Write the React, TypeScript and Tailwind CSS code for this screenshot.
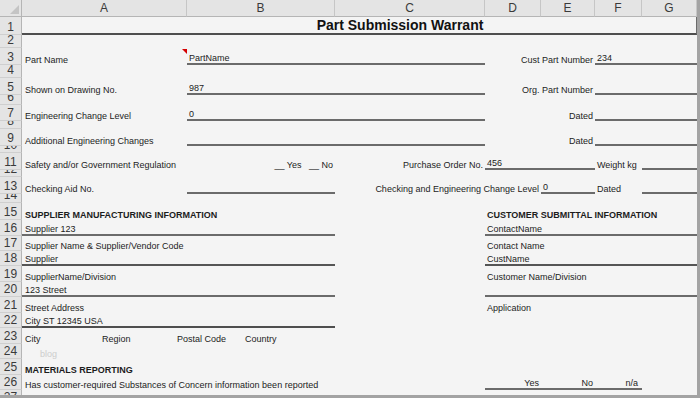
import React from 'react';

// column template: row header, A, B, C, D, E, F, G
const COLS = 'grid grid-rows-1 grid-cols-[22px_165px_148px_150px_56px_54px_47px_55px]';
const T = 'flex items-end whitespace-nowrap text-[9px] leading-[10px] text-[#1c1c1c]';
const L = 'border-b-2 border-[#6b6b6b]';
const B = 'font-bold';

function Row({ n, h, children }: { n: number; h: string; children?: React.ReactNode }) {
  return (
    <div className={`${COLS} ${h}`}>
      <div className="flex items-end justify-center overflow-hidden border-b border-r border-b-[#cfcfcf] border-r-[#b5b5b5] bg-[#e4e4e4] text-[12px] leading-[14px] text-[#3a3a3a]">
        {n}
      </div>
      {children}
    </div>
  );
}

const LETTERS = ['A', 'B', 'C', 'D', 'E', 'F', 'G'];

function App() {
  return (
    <div className="h-[398px] w-[700px] overflow-hidden border-b-[3px] border-r-[3px] border-[#a3a3a3] bg-[#f4f4f4] font-['Liberation_Sans',Arial,sans-serif]">
      {/* Column headers */}
      <div className={`${COLS} h-[17px] bg-[#e4e4e4]`}>
        <div className="relative border-b border-r border-[#b5b5b5]">
          <span className="absolute bottom-[2px] right-[2px] h-0 w-0 border-b-[9px] border-l-[9px] border-b-[#c4c4c4] border-l-transparent" />
        </div>
        {LETTERS.map((l) => (
          <div
            key={l}
            className="flex items-center justify-center border-b border-r border-b-[#b5b5b5] border-r-[#c6c6c6] text-[12px] leading-[14px] text-[#3a3a3a]"
          >
            {l}
          </div>
        ))}
      </div>

      <Row n={1} h="h-[18px]">
        <div className="col-span-7 col-start-2 flex items-end justify-center border-b-2 border-r border-b-[#4e4e4e] border-r-[#6b6b6b] pl-[82px] text-[14px] font-bold leading-[16px] text-[#111]">
          Part Submission Warrant
        </div>
      </Row>
      <Row n={2} h="h-[13px]" />
      <Row n={3} h="h-[17px]">
        <div className={`${T} relative col-start-2 pl-[3px]`}>
          Part Name
          <span className="absolute right-0 top-[1px] h-0 w-0 border-l-[5px] border-t-[5px] border-l-transparent border-t-[#d40000]" />
        </div>
        <div className={`${T} ${L} col-span-2 col-start-3 pl-[2px]`}>PartName</div>
        <div className={`${T} col-span-2 col-start-5 justify-end pr-[2px]`}>Cust Part Number</div>
        <div className={`${T} ${L} col-span-2 col-start-7 pl-[2px]`}>234</div>
      </Row>
      <Row n={4} h="h-[13px]" />
      <Row n={5} h="h-[17px]">
        <div className={`${T} col-start-2 pl-[3px]`}>Shown on Drawing No.</div>
        <div className={`${T} ${L} col-span-2 col-start-3 pl-[2px]`}>987</div>
        <div className={`${T} col-span-2 col-start-5 justify-end pr-[2px]`}>Org. Part Number</div>
        <div className={`${T} ${L} col-span-2 col-start-7`} />
      </Row>
      <Row n={6} h="h-[10px]" />
      <Row n={7} h="h-[16px]">
        <div className={`${T} col-start-2 pl-[3px]`}>Engineering Change Level</div>
        <div className={`${T} ${L} col-span-2 col-start-3 pl-[2px]`}>0</div>
        <div className={`${T} col-span-2 col-start-5 justify-end pr-[2px]`}>Dated</div>
        <div className={`${T} ${L} col-span-2 col-start-7`} />
      </Row>
      <Row n={8} h="h-[8px]" />
      <Row n={9} h="h-[17px]">
        <div className={`${T} col-start-2 pl-[3px]`}>Additional Engineering Changes</div>
        <div className={`${T} ${L} col-span-2 col-start-3`} />
        <div className={`${T} col-span-2 col-start-5 justify-end pr-[2px]`}>Dated</div>
        <div className={`${T} ${L} col-span-2 col-start-7`} />
      </Row>
      <Row n={10} h="h-[7px]" />
      <Row n={11} h="h-[17px]">
        <div className={`${T} col-start-2 pl-[3px]`}>Safety and/or Government Regulation</div>
        <div className={`${T} col-start-3 justify-end whitespace-pre pr-[2px]`}>__ Yes   __ No</div>
        <div className={`${T} col-start-4 justify-end pr-[2px]`}>Purchase Order No.</div>
        <div className={`${T} ${L} col-span-2 col-start-5 pl-[2px]`}>456</div>
        <div className={`${T} col-start-7 pl-[2px]`}>Weight kg</div>
        <div className={`${T} ${L} col-start-8`} />
      </Row>
      <Row n={12} h="h-[7px]" />
      <Row n={13} h="h-[17px]">
        <div className={`${T} col-start-2 pl-[3px]`}>Checking Aid No.</div>
        <div className={`${T} ${L} col-start-3`} />
        <div className={`${T} col-span-2 col-start-4 justify-end pr-[2px]`}>
          Checking and Engineering Change Level
        </div>
        <div className={`${T} ${L} col-start-6 pl-[2px]`}>0</div>
        <div className={`${T} col-start-7 pl-[2px]`}>Dated</div>
        <div className={`${T} ${L} col-start-8`} />
      </Row>
      <Row n={14} h="h-[9px]" />
      <Row n={15} h="h-[17px]">
        <div className={`${T} ${B} col-start-2 pl-[3px]`}>SUPPLIER MANUFACTURING INFORMATION</div>
        <div className={`${T} ${B} col-start-5 pl-[2px]`}>CUSTOMER SUBMITTAL INFORMATION</div>
      </Row>
      <Row n={16} h="h-[16px]">
        <div className={`${T} ${L} col-span-2 col-start-2 pl-[3px]`}>Supplier 123</div>
        <div className={`${T} ${L} col-span-4 col-start-5 pl-[2px]`}>ContactName</div>
      </Row>
      <Row n={17} h="h-[15px]">
        <div className={`${T} col-start-2 pl-[3px]`}>Supplier Name &amp; Supplier/Vendor Code</div>
        <div className={`${T} col-start-5 pl-[2px]`}>Contact Name</div>
      </Row>
      <Row n={18} h="h-[15px]">
        <div className={`${T} col-span-2 col-start-2 border-b-2 border-[#555] pl-[3px]`}>Supplier</div>
        <div className={`${T} col-span-4 col-start-5 border-b-2 border-[#555] pl-[2px]`}>CustName</div>
      </Row>
      <Row n={19} h="h-[16px]">
        <div className={`${T} col-start-2 pl-[3px]`}>SupplierName/Division</div>
        <div className={`${T} col-start-5 pl-[2px]`}>Customer Name/Division</div>
      </Row>
      <Row n={20} h="h-[15px]">
        <div className={`${T} ${L} col-span-2 col-start-2 pl-[3px]`}>123 Street</div>
        <div className={`${T} ${L} col-span-4 col-start-5`} />
      </Row>
      <Row n={21} h="h-[16px]">
        <div className={`${T} col-start-2 pl-[3px]`}>Street Address</div>
        <div className={`${T} col-start-5 pl-[2px]`}>Application</div>
      </Row>
      <Row n={22} h="h-[15px]">
        <div className={`${T} col-span-2 col-start-2 border-b-2 border-[#4e4e4e] pl-[3px]`}>City ST 12345 USA</div>
      </Row>
      <Row n={23} h="h-[16px]">
        <div className={`${T} col-span-3 col-start-2 pl-[3px]`}>
          <span className="w-[77px]">City</span>
          <span className="w-[75px]">Region</span>
          <span className="w-[68px]">Postal Code</span>
          <span>Country</span>
        </div>
      </Row>
      <Row n={24} h="h-[15px]">
        <div className={`${T} col-start-2 pl-[18px] !text-[#cdcdcd]`}>blog</div>
      </Row>
      <Row n={25} h="h-[16px]">
        <div className={`${T} ${B} col-start-2 pl-[3px]`}>MATERIALS REPORTING</div>
      </Row>
      <Row n={26} h="h-[15px]">
        <div className={`${T} col-start-2 pl-[3px]`}>
          Has customer-required Substances of Concern information been reported
        </div>
        <div className={`${T} ${L} col-start-5 justify-end pr-[2px]`}>Yes</div>
        <div className={`${T} ${L} col-start-6 justify-end pr-[2px]`}>No</div>
        <div className={`${T} ${L} col-start-7 justify-end pr-[4px]`}>n/a</div>
      </Row>
      <Row n={27} h="h-[15px]" />
    </div>
  );
}

export default App;
